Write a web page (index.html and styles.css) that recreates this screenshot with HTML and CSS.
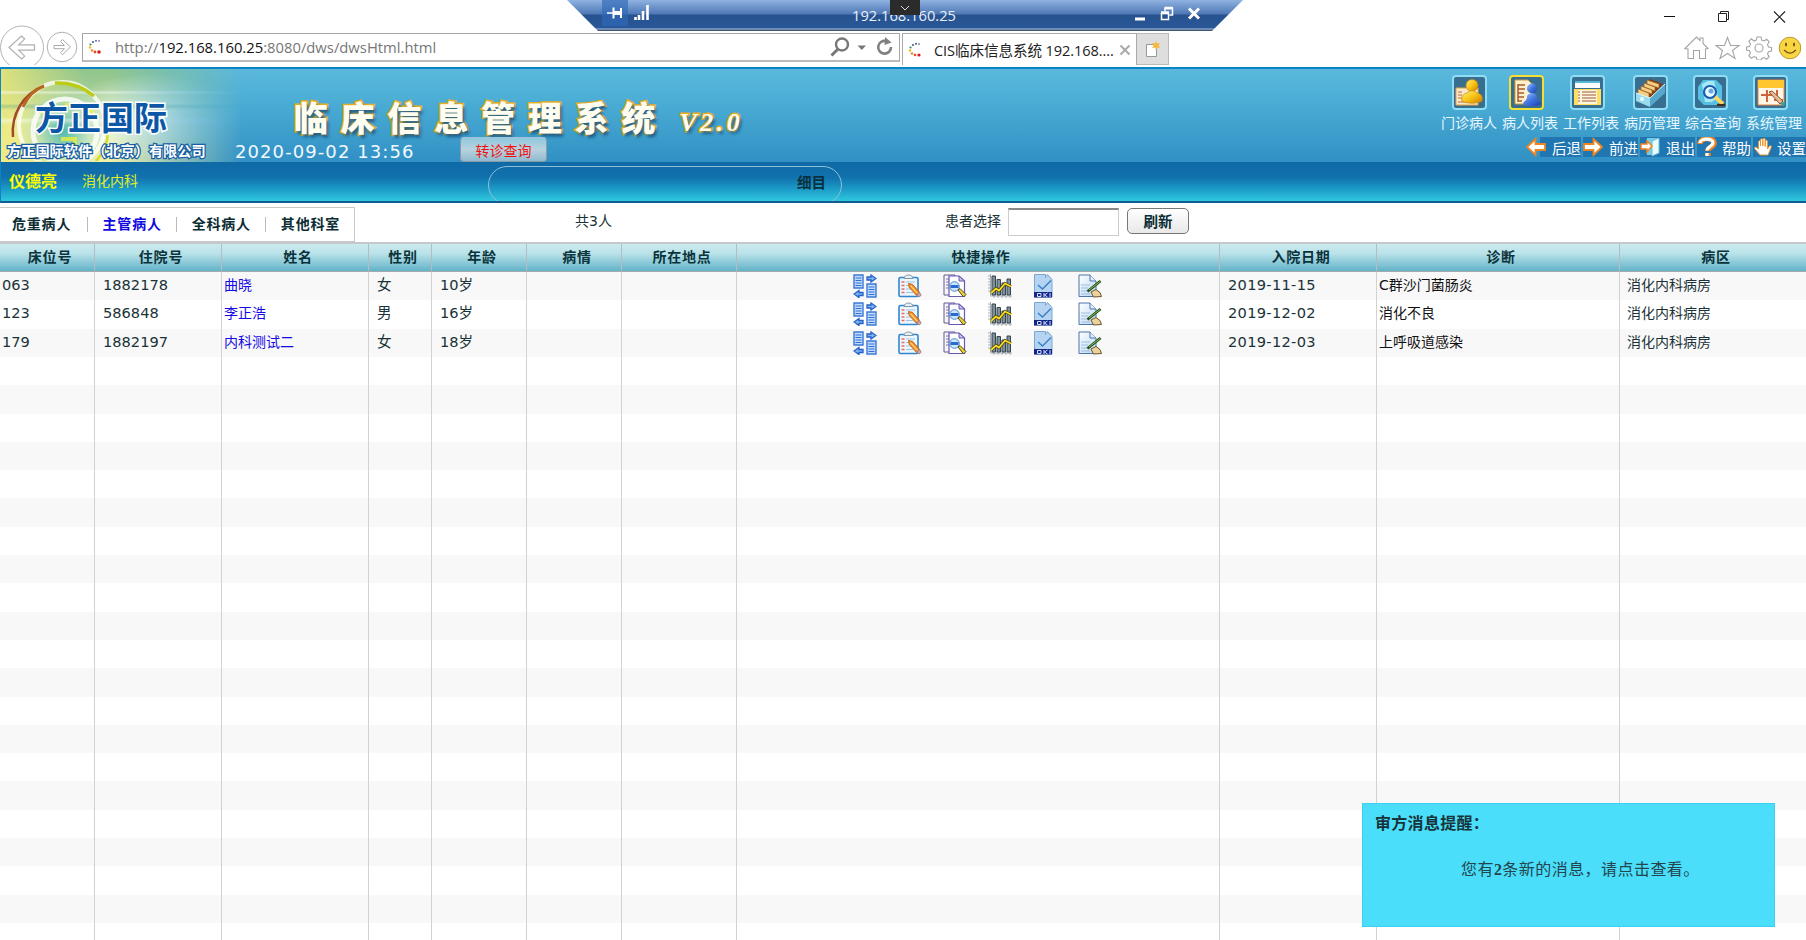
FILE: index.html
```html
<!DOCTYPE html>
<html lang="zh-CN">
<head>
<meta charset="utf-8">
<title>CIS临床信息系统</title>
<link rel="stylesheet" href="styles.css">
</head>
<body>
<svg class="defs" width="0" height="0" aria-hidden="true">
  <defs>
    <linearGradient id="gold" x1="0" y1="0" x2="1" y2="1"><stop offset="0" stop-color="#fff37a"/><stop offset=".5" stop-color="#f9c316"/><stop offset="1" stop-color="#c97f00"/></linearGradient>
    <linearGradient id="blueman" x1="0" y1="0" x2="1" y2="1"><stop offset="0" stop-color="#9cc4ff"/><stop offset=".5" stop-color="#3f74e0"/><stop offset="1" stop-color="#1c3fae"/></linearGradient>
    <linearGradient id="sheet" x1="0" y1="0" x2="1" y2="1"><stop offset="0" stop-color="#fff"/><stop offset="1" stop-color="#b9d7f4"/></linearGradient>
    <symbol id="i-swap" viewBox="0 0 24 24">
      <path d="M1 1h9v13H1zM14 10h9v13h-9z" fill="#c3dbfa" stroke="#3a78d8" stroke-width="1.400"/>
      <path d="M2.500 4h6M2.500 6.500h6M2.500 9h6M2.500 11.500h6M15.500 13h6M15.500 15.500h6M15.500 18h6M15.500 20.500h6" stroke="#2f6fd6" stroke-width="1.200"/>
      <path d="M14 3h4V1l5 3.500L18 8V6h-4zM10 18.500H6v-2L1 20l5 3.500v-2h4z" fill="#7fb2f0" stroke="#2360c8" stroke-width="1.300"/>
    </symbol>
    <symbol id="i-clip" viewBox="0 0 24 24">
      <rect x="1" y="3.500" width="19" height="19" rx="1.500" fill="#eef6fd" stroke="#2f86cf" stroke-width="1.600"/>
      <path d="M6 4.500c0-2 2-3.500 4.500-3.500S15 2.500 15 4.500z" fill="#e9eef2" stroke="#7c98ad"/>
      <path d="M3.500 8h3M3.500 11.500h3M3.500 15h3M3.500 18.500h3" stroke="#ef6b62" stroke-width="1.500"/>
      <path d="M8 8h9M8 11.500h4M8 15h5M8 18.500h7" stroke="#9cc3e6"/>
      <path d="M10.500 9.500l4 .8 7 8-3.200 2.900-7.200-8z" fill="#f58a1f" stroke="#b65710" stroke-width=".8"/>
      <path d="M12.500 11.500l7 8" stroke="#ffd06e" stroke-width="1.300"/><path d="M18.300 21.200l3.200-2.900 1.700 2.800-1.800 1.900z" fill="#d8a2a0" stroke="#7f7080" stroke-width=".7"/>
    </symbol>
    <symbol id="i-search" viewBox="0 0 24 24">
      <path d="M1 1h11v20H1z" fill="#f7f5fc" stroke="#655a8c"/><path d="M3 5h3M3 8h3M3 11h3M3 14h3" stroke="#8077a8"/>
      <path d="M6 2h10l5.500 5v15.500H6z" fill="#fff" stroke="#655ab0" stroke-width="1.200"/><path d="M16 2v5h5.500z" fill="#c4c6ee" stroke="#655ab0"/>
      <circle cx="11.500" cy="12.500" r="4.800" fill="#cde7fa" stroke="#4b8ad0"/><path d="M7.500 11h8v3h-8z" fill="#2d69d0"/>
      <path d="M15 16l2-1.500 6 6-2.500 2.500z" fill="#f0d02e" stroke="#4c462f"/>
    </symbol>
    <symbol id="i-chart" viewBox="0 0 24 24">
      <path d="M2.500 0v22H24M0 2h2.500M0 5h2.500M0 8h2.500M0 11h2.500M0 14h2.500M0 17h2.500M6 22v2M10 22v2M14 22v2M18 22v2M22 22v2" stroke="#a5aeb6" fill="none"/>
      <path d="M4 2h3.500v19H4zM9 5.500h3.500V21H9zM14 9h3.500v12H14zM19 5h3.500v16H19z" fill="#7f9099" stroke="#37454f"/>
      <path d="M3 19l5-4.500 3 2 6-7 6 3" fill="none" stroke="#423c10" stroke-width="3"/><path d="M3 19l5-4.500 3 2 6-7 6 3" fill="none" stroke="#ffe01c" stroke-width="1.700"/>
    </symbol>
    <symbol id="i-ok" viewBox="0 0 24 24">
      <path d="M1.500.5h11v3l2-3 4.500 5V23h-17.500z" fill="#b4d4f1" stroke="#7ba6d0"/>
      <path d="M5 11l4.500 4L18 6.500" fill="none" stroke="#3d7fc4" stroke-width="1.500"/>
      <path d="M1 18h18v5.500H1z" fill="#14258a"/><path d="M4.500 19.500h3.500v3H4.500zM11 19v4M14.500 19l-3 2 3 2M17 19v4" fill="none" stroke="#d7e3ff" stroke-width="1"/>
    </symbol>
    <symbol id="i-edit" viewBox="0 0 24 24">
      <path d="M1 1h11l6 6v15.500H1z" fill="url(#sheet)" stroke="#4c74ad"/><path d="M12 1v6h6" fill="#e2edfb" stroke="#4c74ad"/>
      <path d="M3 11h9M3 14h7M3 17h7M3 20h9" stroke="#9fbddd"/>
      <path d="M13 18l5-2.500 4 3 1.500 4-8 .5z" fill="#ecd29d" stroke="#6d5627"/><path d="M9.500 17.500L22.500 7" stroke="#234f1c" stroke-width="2.800"/><path d="M11 16L22 7.500" stroke="#8bc05e"/>
    </symbol>
  </defs>
</svg>

<header class="browser">
  <div class="addressbar">
    <svg class="back" width="45" height="40" viewBox="0 0 45 40"><circle cx="22" cy="22.500" r="21.500" fill="#fff" stroke="#b5b5b5"/><path d="M9 22.500L21.500 11l3.200 2.800-6 6H34.500v5.400H18.700l6 6-3.200 2.800z" fill="#fff" stroke="#b0b0b0" stroke-width="1.200"/></svg>
    <svg class="forward" width="32" height="32" viewBox="0 0 32 32"><circle cx="16" cy="16" r="14.800" fill="#fff" stroke="#b0b0b0"/><path d="M24.500 16l-8-7.500-2 2 4 4H8v3.200h10.500l-4 4 2 2z" fill="#fff" stroke="#aaa"/></svg>
    <div class="urlbox">
      <svg class="spin" width="16" height="16" viewBox="0 0 16 16"><circle cx="12" cy="2" r=".9" fill="#777cc0"/><circle cx="9" cy="1.800" r="1" fill="#6068b5"/><circle cx="6" cy="3" r="1.100" fill="#4063a0"/><circle cx="3.500" cy="5.500" r="1.100" fill="#3a8b50"/><circle cx="3" cy="8.500" r="1.200" fill="#f0bf16"/><circle cx="5" cy="11.500" r="1.300" fill="#ed8a20"/><circle cx="8" cy="13" r="1.400" fill="#e64a26"/><circle cx="12" cy="13" r="1.800" fill="#d81e1e"/></svg>
      <span class="url">http://<b>192.168.160.25</b>:8080/dws/dwsHtml.html</span>
      <svg class="urltools" width="64" height="20" viewBox="0 0 64 20"><circle cx="12" cy="7.500" r="6" fill="none" stroke="#777" stroke-width="2.400"/><path d="M8 12l-6.500 6.500" stroke="#777" stroke-width="3"/><path d="M27.500 8.500h8.500l-4.200 4.500z" fill="#777"/><path d="M56 4a6.400 6.400 0 1 0 5 6" fill="none" stroke="#808080" stroke-width="2.600"/><path d="M55 0l6.500 5.500-7 2.500z" fill="#808080"/></svg>
    </div>
    <div class="tab">
      <svg class="spin" width="16" height="16" viewBox="0 0 16 16"><circle cx="12" cy="2" r=".9" fill="#777cc0"/><circle cx="9" cy="1.800" r="1" fill="#555"/><circle cx="6" cy="3" r="1.100" fill="#40638a"/><circle cx="3.500" cy="5.500" r="1.100" fill="#3a8b50"/><circle cx="3" cy="8.500" r="1.200" fill="#f0bf16"/><circle cx="5" cy="11.500" r="1.300" fill="#ed8a20"/><circle cx="8" cy="13" r="1.300" fill="#e64a26"/><circle cx="12" cy="13" r="1.600" fill="#d81e1e"/></svg>
      <span class="tabname">CIS临床信息系统 192.168....</span>
      <svg width="12" height="12" viewBox="0 0 12 12"><path d="M1.500 1.500l9 9M10.500 1.500l-9 9" stroke="#aaa" stroke-width="2"/></svg>
    </div>
    <div class="newtab"><svg width="16" height="18" viewBox="0 0 16 18"><path d="M1.500 4.500h10v12h-10z" fill="#fff" stroke="#999"/><path d="M11 1l1.200 2.500L15 3l-1.500 2.500L15 8l-2.800-.5L11 10l-1-2.500L7 8l1.500-2.500L7 3l3 .5z" fill="#f5b83c"/></svg></div>
  </div>
  <div class="windowside">
    <svg class="winbtns" width="124" height="14" viewBox="0 0 124 14"><path d="M0 6.500h11" stroke="#111"/><path d="M54.500 3.500h8v8h-8zM56.500 3.500v-2h8v8h-2" fill="none" stroke="#222"/><path d="M110 1.500l11 11M121 1.500l-11 11" stroke="#222" stroke-width="1.200"/></svg>
    <svg class="brtools" width="118" height="24" viewBox="0 0 118 24">
      <g fill="#fff" stroke="#a5a5a5" stroke-width="1.100"><path d="M1 12.500L12.500 1l3.500 3.500V2h3v5.500l5 5-2.500.5v9.500h-6v-8h-6v8H4V13z"/><path d="M43.500 1.500l3 8H55l-6.500 5 2.500 8-7.500-5-7.500 5 2.500-8-6.500-5h8.500z"/><path d="M73 1h4l.7 3 2.300 1 2.700-1.700 2.500 2.500L83.500 8.500l1 2.500 3 .5v3.500l-3 .7-1 2.300 1.700 2.700-2.500 2.500L80 21.500l-2.300 1L77 24h-4l-.7-2.500-2.300-1-2.700 1.700-2.500-2.500 1.700-2.700-1-2.300-3-.7v-3l3-.5 1-2.500-1.700-2.700 2.500-2.500L70 5l2.300-1z"/><circle cx="75" cy="12" r="4"/></g>
      <circle cx="106" cy="12" r="10.800" fill="#f9d542" stroke="#b99b35"/><ellipse cx="102" cy="8.500" rx="1" ry="2" fill="#6b521a"/><ellipse cx="110" cy="8.500" rx="1" ry="2" fill="#6b521a"/><path d="M100 14q6 6 12 0" fill="none" stroke="#6b521a" stroke-width="1.200"/></svg>
  </div>
  <div class="remote">
    <div class="remote-shape">
      <span class="pin"><svg width="16" height="14" viewBox="0 0 16 14"><path d="M0 7h6" stroke="#fff" stroke-width="1.500"/><path d="M6.500 1.500v11M14 2v10" stroke="#fff" stroke-width="2"/><path d="M6 5h8v4H6z" fill="#fff"/></svg></span>
      <svg class="signal" width="16" height="16" viewBox="0 0 16 16"><path d="M1.500 15v-3M5 15v-5M9 15V6M13.500 15V0" stroke="#fff" stroke-width="2.600"/></svg>
      <span class="remote-ip">192.168.160.25</span>
      <svg class="remote-btns" width="68" height="16" viewBox="0 0 68 16"><path d="M1 13h10" stroke="#fff" stroke-width="3"/><path d="M27.500 7.500h7v6h-7zM31 5V2.500h7.500V9h-3" fill="none" stroke="#fff" stroke-width="1.500"/><path d="M27 6.500h8M30.500 2h8.500" stroke="#fff" stroke-width="2.500"/><path d="M55 2.500l10 10M65 2.500l-10 10" stroke="#fff" stroke-width="3"/></svg>
    </div>
    <span class="remote-drop"><svg width="10" height="6" viewBox="0 0 10 6"><path d="M1 1l4 4 4-4" fill="none" stroke="#ddd"/></svg></span>
  </div>
</header>

<section class="banner">
  <div class="banner-top">
    <div class="logo">
      <svg class="rings" width="110" height="92" viewBox="0 0 110 92"><g fill="none"><circle cx="61" cy="56" r="43" stroke="#fff" stroke-width="4" opacity=".75"/><circle cx="64" cy="62" r="32" stroke="#fff" stroke-width="5" opacity=".8"/><path d="M12 68C10 45 22 25 43 17" stroke="#a3482a" stroke-width="2.500"/><path d="M22 38C27 27 34 20 43 17" stroke="#b56a1d" stroke-width="3"/><path d="M54 14c16-1 28 4 39 13" stroke="#bccc15" stroke-width="3.500"/><path d="M107 61c0 13-4 23-12 31" stroke="#d5dc2c" stroke-width="2.500"/><path d="M38 44l8-6M64 36h20l8 8M60 70h14v10" stroke="#e9ec3c" stroke-width="4" opacity=".8"/></g></svg>
      <strong class="brand">方正国际</strong>
      <span class="company">方正国际软件（北京）有限公司</span>
    </div>
    <div class="headline">
      <h1 class="title">临床信息管理系统<em>V2.0</em></h1>
      <div class="subline"><time class="clock">2020-09-02 13:56</time><button class="transfer">转诊查询</button></div>
    </div>
    <div class="menus">
      <nav class="mainmenu">
        <a class="mm"><svg class="mi" viewBox="2 2 31 31"><path d="M4 13h22v17H4z" fill="#f6e9cd" stroke="#e8a23c"/><path d="M6 17h4M6 20h4M6 23h4M6 27h16" stroke="#c46b3a"/><circle cx="20" cy="10.500" r="6" fill="url(#gold)" stroke="#c88a08" stroke-width=".7"/><path d="M10 26c-1-5 1-7 5-8 3-3 7-3 10 0 4 1 6 3 5 8-5 3-15 3-20 0z" fill="url(#gold)" stroke="#c88a08" stroke-width=".7"/></svg><span>门诊病人</span></a>
        <a class="mm s1 active"><svg class="mi" viewBox="2 2 31 31"><path d="M6 5h13l4 4v20H6z" fill="#fff0cd" stroke="#d19b3a"/><path d="M9 10h7M9 14h7M9 18h6M9 22h6M9 26h4M9 9v18" stroke="#a85b2c" stroke-width="1.500"/><circle cx="23" cy="13.500" r="5" fill="url(#blueman)"/><path d="M14 29c0-3 4-3 4-7 0-5 10-5 10 0 0 4 4 4 4 7-4 3-14 3-18 0z" fill="url(#blueman)"/></svg><span>病人列表</span></a>
        <a class="mm s2"><svg class="mi" viewBox="2 2 31 31"><path d="M5 6h25v7H5z" fill="#fff"/><path d="M5 6h25v2H5z" fill="#55b8d8"/><path d="M4 14h27v16H4z" fill="#ffde62"/><path d="M8 15h19v14H8z" fill="#fff6dd"/><path d="M8 17h2M12 17h14M8 20h2M12 20h14M8 23h2M12 23h14M8 26h2M12 26h14" stroke="#985a3a"/></svg><span>工作列表</span></a>
        <a class="mm s3"><svg class="mi" viewBox="2 2 31 31"><path d="M5 18L17 4l13 5-13 15z" fill="#7c3f16"/><path d="M5 14l11 4v6L5 20zM8 11l11 4v4L8 15zM11 8l11 4v4l-11-4zM14 5l12 4v4L14 9z" fill="#f3cf86" stroke="#a3601f" stroke-width=".7"/><path d="M3 18l14 5v9L3 26z" fill="#9adcee"/><path d="M17 23L32 9v9L17 32z" fill="#55a7cb"/><path d="M3 18l14 5L32 9" fill="none" stroke="#dff8ff"/><circle cx="9" cy="24" r="2" fill="#e6ffff"/></svg><span>病历管理</span></a>
        <a class="mm s4"><svg class="mi" viewBox="2 2 31 31"><path d="M10 5h13l6 6v13l-5 6H11l-6-6V12z" fill="#55c0e2"/><path d="M9 9l6-3h6l4 16-6 5h-7z" fill="#a8e8f5"/><circle cx="17" cy="17" r="6" fill="#e9faff" stroke="#1b5bb4" stroke-width="2.200"/><circle cx="18" cy="16" r="2.500" fill="#6aa6df"/><path d="M22 22l8 7" stroke="#ffd55c" stroke-width="4"/><path d="M24 30h8" stroke="#432b16" stroke-width="2"/></svg><span>综合查询</span></a>
        <a class="mm s5"><svg class="mi" viewBox="2 2 31 31"><path d="M5 5h26v25H5z" fill="#fff6e8" stroke="#e8803b"/><path d="M5 5h26v8H5z" fill="#ffc62f"/><path d="M8 20h11M14 15v12M21 25h9M24 15v6" stroke="#cf643a" stroke-width="2"/><path d="M16 17l3-1 11 10-3 3z" fill="#e9bb91" stroke="#83533a"/><circle cx="30" cy="29" r="2" fill="#27a99a"/></svg><span>系统管理</span></a>
      </nav>
      <nav class="submenu">
        <a><svg width="20" height="20" viewBox="0 0 20 20"><path d="M1 10L9.500 2v5H19v6H9.500v5z" fill="#fff" stroke="#ef8421" stroke-width="1.800"/></svg><span>后退</span></a>
        <a><svg width="20" height="20" viewBox="0 0 20 20"><path d="M19 10l-8.500-8v5H1v6h9.500v5z" fill="#fff" stroke="#ef8421" stroke-width="1.800"/></svg><span>前进</span></a>
        <a><svg width="20" height="20" viewBox="0 0 20 20"><path d="M7 1h12v15l-5 2H7z" fill="#77cbe5"/><path d="M12 4l7-3v15l-7 3z" fill="#e8fbff" stroke="#70bdd8"/><path d="M12 9L7 4v3H1v5h6v3z" fill="#fff" stroke="#ef8421" stroke-width="1.500"/></svg><span>退出</span></a>
        <a><svg width="20" height="20" viewBox="0 0 20 20"><path d="M3 7c0-7 14-7 14-1 0 4-6 4-6 8M11 16v3" fill="none" stroke="#ef8421" stroke-width="5.500"/><path d="M3 6c0-5 13-5 13-.5 0 4-6 4-6 8M10 16v3" fill="none" stroke="#fff" stroke-width="3.200"/></svg><span>帮助</span></a>
        <a><svg width="20" height="20" viewBox="0 0 20 20"><path d="M5.500 12V4.500q1-1.500 2 0V9V2.500q1.200-1.500 2.300 0V9V2q1.200-1.500 2.400 0v7.500V4q1.200-1.300 2.300 0v8l2-3q1.500-.8 2 .6L15 18H7L1.500 11.500q0-1.600 1.700-1.400z" fill="#fff" stroke="#e9942f" stroke-width="1"/></svg><span>设置</span></a>
      </nav>
    </div>
  </div>
  <div class="banner-bottom">
    <b class="user">仪德亮</b><span class="dept">消化内科</span>
    <div class="detail">细目</div>
  </div>
</section>

<section class="filter">
  <nav class="tabs"><a>危重病人</a><a class="current">主管病人</a><a>全科病人</a><a>其他科室</a></nav>
  <span class="count">共3人</span>
  <label class="pick">患者选择</label>
  <input class="pickbox" type="text" aria-label="患者选择">
  <button class="refresh">刷新</button>
</section>

<main class="list">
  <div class="row head"><div>床位号</div><div>住院号</div><div>姓名</div><div>性别</div><div>年龄</div><div>病情</div><div>所在地点</div><div>快捷操作</div><div>入院日期</div><div>诊断</div><div>病区</div></div>
  <div class="row alt"><div class="tight">063</div><div>1882178</div><div class="name">曲晓</div><div>女</div><div>10岁</div><div></div><div></div><div class="ops"><svg><use href="#i-swap"/></svg><svg><use href="#i-clip"/></svg><svg><use href="#i-search"/></svg><svg><use href="#i-chart"/></svg><svg><use href="#i-ok"/></svg><svg><use href="#i-edit"/></svg></div><div class="date">2019-11-15</div><div class="diag">C群沙门菌肠炎</div><div>消化内科病房</div></div>
  <div class="row"><div class="tight">123</div><div>586848</div><div class="name">李正浩</div><div>男</div><div>16岁</div><div></div><div></div><div class="ops"><svg><use href="#i-swap"/></svg><svg><use href="#i-clip"/></svg><svg><use href="#i-search"/></svg><svg><use href="#i-chart"/></svg><svg><use href="#i-ok"/></svg><svg><use href="#i-edit"/></svg></div><div class="date">2019-12-02</div><div class="diag">消化不良</div><div>消化内科病房</div></div>
  <div class="row alt"><div class="tight">179</div><div>1882197</div><div class="name">内科测试二</div><div>女</div><div>18岁</div><div></div><div></div><div class="ops"><svg><use href="#i-swap"/></svg><svg><use href="#i-clip"/></svg><svg><use href="#i-search"/></svg><svg><use href="#i-chart"/></svg><svg><use href="#i-ok"/></svg><svg><use href="#i-edit"/></svg></div><div class="date">2019-12-03</div><div class="diag">上呼吸道感染</div><div>消化内科病房</div></div>
  <div class="row blank"><div></div><div></div><div></div><div></div><div></div><div></div><div></div><div></div><div></div><div></div><div></div></div>
</main>

<aside class="notice">
  <strong class="notice-title">审方消息提醒：</strong>
  <p class="notice-text">您有<b>2</b>条新的消息，请点击查看。</p>
</aside>
</body>
</html>
```

FILE: styles.css
```css
* { box-sizing: border-box; }
body {
  margin: 0;
  width: 1806px;
  height: 940px;
  overflow: hidden;
  position: relative;
  display: flex;
  flex-direction: column;
  background: #fff;
  font: 14px "DejaVu Sans", "Noto Sans CJK SC", sans-serif;
  color: #1b3338;
}
svg { display: block; flex: none; }
.defs { position: absolute; }

/* browser chrome */
.browser { height: 67px; flex: none; position: relative; display: flex; justify-content: space-between; }
.addressbar { display: flex; align-items: flex-start; padding-top: 25px; height: 65px; }
.forward { margin: 6px 4px 0 1px; }
.urlbox { width: 818px; height: 29px; margin-top: 8px; border: 1px solid #a5a5a5; border-bottom: 2px solid #bbb; display: flex; align-items: center; }
.spin { margin-left: 4px; }
.url { margin-left: 12px; flex: 1; font: 14.800px "Open Sans", "Noto Sans", sans-serif; color: #777; white-space: nowrap; }
.url b { font-weight: 400; color: #111; }
.urltools { margin-right: 5px; }
.tab { width: 235px; height: 32px; margin: 8px 0 0 2px; border: 1px solid #aaa; border-bottom: 0; display: flex; align-items: center; }
.tabname { margin-left: 11px; width: 185px; font: 14.600px "Open Sans", "Noto Sans CJK SC", sans-serif; letter-spacing: -.1px; color: #222; white-space: nowrap; }
.newtab { width: 32px; height: 32px; margin-top: 8px; background: #dedede; border: 1px solid #bbb; border-left: 0; display: flex; align-items: center; justify-content: center; }
.windowside { display: flex; flex-direction: column; gap: 12px; padding: 10px 4px 0 0; }
.winbtns { align-self: flex-end; margin-right: 14px; }
.brtools { align-self: flex-end; }

.remote { position: absolute; left: 567px; top: 0; width: 676px; height: 31px; }
.remote-shape {
  height: 31px;
  display: flex;
  align-items: flex-start;
  clip-path: polygon(0 0, 100% 0, 645px 31px, 31px 31px);
  background: linear-gradient(#8fb2e0 0, #6e95cc 7px, #4f78b4 14px, #26528f 15px, #2a5797 28px, #a9c1e2 29px, #3e5575 30px);
}
.pin { width: 26px; height: 26px; margin-left: 35px; display: flex; align-items: center; justify-content: center; background: #2e6bb8aa; }
.signal { margin: 5px 0 0 6px; }
.remote-ip { margin: 5px 0 0 202px; width: 110px; font: 14.700px/20px "Open Sans", sans-serif; color: #e8effa; white-space: nowrap; }
.remote-btns { margin: 6px 0 0 172px; }
.remote-drop { position: absolute; left: 323px; top: 0; width: 30px; height: 15px; background: #2b2b2b; display: flex; align-items: center; justify-content: center; }

/* banner */
.banner { height: 136px; flex: none; border: solid #0d83c6; border-width: 2px 0 2px 1px; border-bottom-color: #145c90; }
.banner-top { height: 93px; display: flex; background: linear-gradient(#5bb8dc, #4badd5 35%, #3190c4); }
.logo { width: 234px; position: relative; display: flex; flex-direction: column; white-space: nowrap; }
.logo::before {
  content: "";
  position: absolute;
  inset: 0 -8px 0 0;
  mask-image: linear-gradient(90deg, #000 45%, transparent);
  background:
    linear-gradient(transparent 23%, #ffffff80 25%, transparent 28%, transparent 37%, #4b9c8055 40%, transparent 44%, transparent 52%, #ffffff70 55%, transparent 60%),
    radial-gradient(circle at 62px 62px, #4fb8b0 0, #a9dcc088 26px, transparent 46px),
    radial-gradient(ellipse 95px 45px at 150px 50px, #f3fbf2 0, transparent),
    linear-gradient(90deg, #f0e878cc, transparent 35%),
    linear-gradient(#8fc58c 0, #a9cf96 30%, #dfeeb8 60%, #f2f1a6 100%);
}
.rings { position: absolute; left: 0; top: 0; }
.brand { position: relative; margin: 24px 0 0 34px; font: 700 33px/46px "Noto Sans CJK SC", sans-serif; color: #0c57a6; -webkit-text-stroke: 3px #fff; paint-order: stroke fill; }
.company { position: relative; margin: 0 0 0 6px; font: 700 14.200px/22px "Noto Sans CJK SC", sans-serif; color: #fff; -webkit-text-stroke: 2.500px #175ea3; paint-order: stroke fill; }
.headline { width: 540px; white-space: nowrap; }
.title { margin: 0 0 0 59px; padding-top: 24px; font: 900 34px/48px "Noto Sans CJK SC", sans-serif; letter-spacing: 12.800px; color: #fffdf0; -webkit-text-stroke: 3px #e6ac22; paint-order: stroke fill; text-shadow: 2px 3px 3px #1c5f8c; }
.title em { margin-left: 11px; font: italic 700 26px "Liberation Serif", serif; letter-spacing: 3.500px; }
.subline { display: flex; align-items: flex-start; margin-top: -4px; }
.clock { width: 225px; line-height: 30px; font-size: 18px; letter-spacing: 1.080px; color: #f1f9ff; }
.transfer { width: 87px; height: 25px; margin-top: 0; padding: 0; border: 1px solid #8a9ba8; border-top-color: #9fc3d5; border-radius: 4px; background: linear-gradient(#8fc8e0, #b9d2dd 50%, #8fbad0); font: 14px/20px "Noto Sans CJK SC", sans-serif; color: #f01010; }
.menus { margin-left: auto; display: flex; flex-direction: column; align-items: flex-end; }
.mainmenu { display: flex; gap: 5px; padding: 6px 4px 0 0; }
.mm { width: 56px; display: flex; flex-direction: column; align-items: center; color: #e8f7ff; white-space: nowrap; }
.mm span { line-height: 26px; }
.mi { width: 35px; height: 35px; border: 2px solid #8edcf6; border-radius: 4px; background: #386f91; }
.active .mi { border-color: #f5df32; }
.s1 .mi { margin-right: 7px; }
.s2 .mi { margin-right: 8px; }
.s3 .mi { margin-right: 4px; }
.s4 .mi { margin-right: 6px; }
.s5 .mi { margin-right: 8px; }
.submenu { display: flex; gap: 2px; height: 20px; margin-top: 1px; }
.submenu a { display: flex; align-items: center; justify-content: space-between; width: 55px; background: #1f76b1; color: #fff; font-size: 14.500px; white-space: nowrap; }
.submenu a:first-child { background: linear-gradient(90deg, transparent 14px, #1f76b1 14px); }
.submenu a:nth-child(4) { width: 54px; }
.submenu a:nth-child(5) { width: 53px; }

.banner-bottom { height: 39px; overflow: hidden; display: flex; align-items: flex-start; background: linear-gradient(#0f69a5 0, #1172ad 40%, #1c9cc8 70%, #2fc8df 100%); white-space: nowrap; }
.user { margin-left: 8px; width: 73px; font: 700 16px/37px "Noto Sans CJK SC", sans-serif; color: #ff0; }
.dept { width: 406px; line-height: 39px; color: #e0ee28; }
.detail { width: 354px; height: 38px; margin-top: 4px; border: 1px solid #8fc0d8; border-radius: 19px; padding-right: 15px; text-align: right; font: 700 14.500px/29px "Noto Sans CJK SC", sans-serif; color: #08303d; }

/* filter line */
.filter { height: 39px; flex: none; display: flex; align-items: flex-start; white-space: nowrap; }
.tabs { width: 355px; height: 35px; margin-top: 4px; display: flex; align-items: center; border: solid #c9c9c9; border-width: 1px 1px 1px 0; }
.tabs a { width: 89.600px; height: 15px; padding-left: 15px; font: 700 14px/13px "Noto Sans CJK SC", sans-serif; letter-spacing: .8px; color: #0b2d34; border-left: 1px solid #bbb; }
.tabs a:first-child { width: 87px; padding-left: 12px; border-left: 0; }
.tabs .current { color: #1008e0; }
.count { margin-left: 220px; width: 370px; line-height: 36px; }
.pick { width: 63px; line-height: 36px; }
.pickbox { width: 111px; height: 28px; margin-top: 5px; border: 1px solid #ccc; border-top: 2px solid #888; background: #fff; }
.refresh { width: 62px; height: 26px; margin: 5px 0 0 8px; padding: 0; border: 1px solid #777; border-radius: 5px; background: linear-gradient(#fff, #e8e8e8); font: 700 14.500px/20px "Noto Sans CJK SC", sans-serif; color: #0b2d34; }

/* patient list */
.list { flex: 1; min-height: 0; display: flex; flex-direction: column; }
.row { display: grid; grid-template-columns: 95px 127px 147px 63px 95px 95px 115px 483px 157px 243px 1fr; height: 28.300px; flex: none; }
.row > div { padding-left: 8px; border-right: 1px solid #d2d2d2; line-height: 26px; font-size: 14.600px; white-space: nowrap; overflow: hidden; }
.row > div:last-child { border-right: 0; padding-left: 7px; font-size: 14px; }
.row > .tight { padding-left: 2px; }
.row > .date { letter-spacing: .3px; }
.row > .name { padding-left: 2px; font-size: 14px; color: #1408e6; }
.row > .diag { padding-left: 2px; font-size: 14px; color: #111; }
.alt { background: #f8f8f8; }
.row.head { height: 30px; border-top: 2px solid #c4c9cb; border-bottom: 1px solid #a5aaad; background: linear-gradient(#cbebef, #b9e2e9 35%, #62b3c9); }
.row.head > div { padding-left: 6px; text-align: center; font: 700 14px/25px "Noto Sans CJK SC", sans-serif; letter-spacing: .8px; color: #0b333b; border-color: #b3bcc0; }
.row > .ops { display: flex; gap: 21px; padding: 2px 0 0 116px; }
.ops svg { width: 24px; height: 24px; }
.row.blank { flex: 1; background: repeating-linear-gradient(#fff 0, #fff 28.300px, #f8f8f8 28.300px, #f8f8f8 56.600px); }

/* reminder popup */
.notice { position: absolute; left: 1362px; top: 803px; width: 413px; height: 124px; padding: 6px 12px; background: #4adefa; border: 1px solid #3ad0f2; color: #24454d; white-space: nowrap; }
.notice-title { display: block; font: 700 16px/24px "Noto Sans CJK SC", sans-serif; letter-spacing: .3px; color: #17343a; }
.notice-text { margin: 25px 0 0 86px; font: 16px/22px "Liberation Serif", "Noto Sans CJK SC", serif; letter-spacing: .45px; }
```
